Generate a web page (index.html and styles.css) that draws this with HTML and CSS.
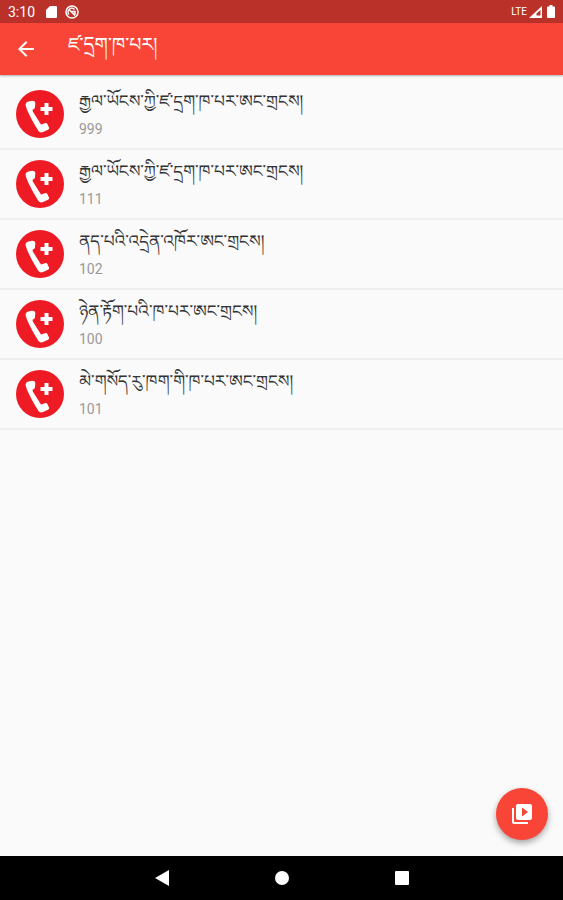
FILE: index.html
```
<!DOCTYPE html>
<html lang="bo">
<head>
    <meta charset="UTF-8">
    <meta name="viewport" content="width=device-width, initial-scale=1.0">
    <title>ཛ་དྲག་ཁ་པར།</title>
    <link rel="stylesheet" href="styles.css">
</head>
<body>

    <!-- shared call icon -->
    <svg class="defs" width="0" height="0" aria-hidden="true">
        <symbol id="call" viewBox="0 0 48 48">
            <circle cx="24" cy="24" r="24" fill="#ee1b24"/>
            <path d="M9.800 16C9 13.500 10.500 12 12.500 11.500L16 10.800C17.500 10.600 19.200 11.500 19.300 13L19 17C18.900 18.500 18 19 16.600 19.600L16.800 21.500L25 34.500L29 33.200C30.300 32.900 31 33.200 31.500 34.200L33 37.500C33.300 38.600 33 39.200 32 39.700L27 42C25.300 42.700 23.500 42.500 22.500 41C20 37 12 24 9.800 16Z" fill="#fff"/>
            <path d="M28.500 13h4v4h4v4h-4v4h-4v-4h-4v-4h4z" fill="#fff"/>
        </symbol>
    </svg>

    <div class="status">
        <span class="time">3:10</span>
        <svg class="sd" width="11" height="12" viewBox="0 0 11 12"><path d="M4 0H10Q11 0 11 1V11Q11 12 10 12H1Q0 12 0 11V4Z" fill="#fff"/></svg>
        <svg class="sync" width="14" height="14" viewBox="0 0 14 14" fill="none" stroke="#fff">
            <circle cx="7" cy="7" r="6" stroke-width="1.500"/>
            <path d="M4 9.500A3.500 3.500 0 0 1 9.500 4.500M4 4.500l6 6M6 6.500h4v3" stroke-width="1.500"/>
        </svg>
        <span class="lte">LTE</span>
        <svg width="13" height="12" viewBox="0 0 13 12"><path d="M0 12L13 0V12Z" fill="#fff"/><path d="M7.500 7.500L11.500 4V9.500H7.500Z" fill="#b93129"/></svg>
        <svg class="battery" width="8" height="13" viewBox="0 0 8 13"><path d="M2.500 0h3v1.500H7Q8 1.500 8 2.500V12Q8 13 7 13H1Q0 13 0 12V2.500Q0 1.500 1 1.500H2.500Z" fill="#fff"/></svg>
    </div>

    <header>
        <button class="back" aria-label="Back">
            <svg width="16" height="16" viewBox="4 4 16 16"><path d="M20 11H7.830l5.590-5.590L12 4l-8 8 8 8 1.410-1.410L7.830 13H20z" fill="#fff"/></svg>
        </button>
        <h1>ཛ་དྲག་ཁ་པར།</h1>
    </header>

    <main>
        <ul class="contacts">
            <li>
                <a href="tel:999">
                    <svg class="call"><use href="#call"/></svg>
                    <span class="text"><span class="name">རྒྱལ་ཡོངས་ཀྱི་ཛ་དྲག་ཁ་པར་ཨང་གྲངས།</span><span class="number">999</span></span>
                </a>
            </li>
            <li>
                <a href="tel:111">
                    <svg class="call"><use href="#call"/></svg>
                    <span class="text"><span class="name">རྒྱལ་ཡོངས་ཀྱི་ཛ་དྲག་ཁ་པར་ཨང་གྲངས།</span><span class="number">111</span></span>
                </a>
            </li>
            <li>
                <a href="tel:102">
                    <svg class="call"><use href="#call"/></svg>
                    <span class="text"><span class="name">ནད་པའི་འདྲེན་འཁོར་ཨང་གྲངས།</span><span class="number">102</span></span>
                </a>
            </li>
            <li>
                <a href="tel:100">
                    <svg class="call"><use href="#call"/></svg>
                    <span class="text"><span class="name">ཉེན་རྟོག་པའི་ཁ་པར་ཨང་གྲངས།</span><span class="number">100</span></span>
                </a>
            </li>
            <li>
                <a href="tel:101">
                    <svg class="call"><use href="#call"/></svg>
                    <span class="text"><span class="name">མེ་གསོད་རུ་ཁག་གི་ཁ་པར་ཨང་གྲངས།</span><span class="number">101</span></span>
                </a>
            </li>
        </ul>

        <button class="fab" aria-label="Videos">
            <svg width="20" height="20" viewBox="2 2 20 20"><path d="M4 6H2v14c0 1.100.9 2 2 2h14v-2H4V6zm16-4H8c-1.100 0-2 .9-2 2v12c0 1.100.9 2 2 2h12c1.100 0 2-.9 2-2V4c0-1.100-.9-2-2-2zm-8 12.500v-9l6 4.500-6 4.500z" fill="#fff"/></svg>
        </button>
    </main>

    <nav>
        <button aria-label="Back"><svg width="16" height="16" viewBox="0 0 16 16"><path d="M1 8L15 0V16Z" fill="#fff"/></svg></button>
        <button aria-label="Home"><svg width="16" height="16" viewBox="0 0 16 16"><circle cx="8" cy="8" r="7" fill="#fff"/></svg></button>
        <button aria-label="Recent apps"><svg width="16" height="16" viewBox="0 0 16 16"><rect x="1" y="1" width="14" height="14" rx="1" fill="#fff"/></svg></button>
    </nav>

</body>
</html>
```
FILE: styles.css
```
* {
    box-sizing: border-box;
}

body {
    font-family: Roboto, "Noto Serif Tibetan", "Noto Sans Tibetan", "Microsoft Himalaya", sans-serif;
    margin: 0;
    min-height: 100vh;
    display: flex;
    flex-direction: column;
    background-color: #fafafa;
}

button {
    border: 0;
    padding: 0;
    background: none;
    display: flex;
    align-items: center;
    justify-content: center;
    cursor: pointer;
}

.defs {
    position: absolute;
}

.status {
    height: 23px;
    padding: 0 8px;
    display: flex;
    align-items: center;
    background-color: #b93129;
    color: white;
}

.time {
    font-size: 14px;
    font-weight: normal;
}

.sd {
    margin-left: 11px;
}

.sync {
    margin-left: 8px;
}

.lte {
    margin-left: auto;
    margin-right: 2px;
    font-size: 10px;
}

.battery {
    margin-left: 5px;
}

header {
    height: 52px;
    display: flex;
    align-items: center;
    background-color: #f84537;
    color: white;
    box-shadow: 0 1px 2px rgba(0, 0, 0, 0.3);
}

.back {
    width: 52px;
    height: 52px;
}

h1 {
    margin: 0;
    padding: 0 0 8px 16px;
    font-size: 19px;
    font-weight: normal;
    line-height: 24px;
}

main {
    flex: 1;
    display: flex;
    flex-direction: column;
}

.contacts {
    list-style: none;
    margin: 0;
    padding: 5px 0 0;
}

.contacts li {
    border-bottom: 2px solid #eeeeee;
}

.contacts a {
    height: 68px;
    padding: 0 16px;
    display: flex;
    align-items: center;
    gap: 15px;
    color: #333333;
    text-decoration: none;
}

.call {
    width: 48px;
    height: 48px;
}

.text {
    display: flex;
    flex-direction: column;
    gap: 4px;
    padding-bottom: 2px;
}

.name {
    font-size: 17px;
    line-height: 28px;
    white-space: nowrap;
}

.number {
    font-size: 14px;
    line-height: 20px;
    color: #999999;
}

.fab {
    width: 52px;
    height: 52px;
    margin: auto 15px 16px auto;
    border-radius: 50%;
    background-color: #f84537;
    box-shadow: 0 3px 6px rgba(0, 0, 0, 0.35);
}

nav {
    height: 44px;
    display: flex;
    justify-content: center;
    gap: 72px;
    background-color: black;
}

nav button {
    width: 48px;
}
```
